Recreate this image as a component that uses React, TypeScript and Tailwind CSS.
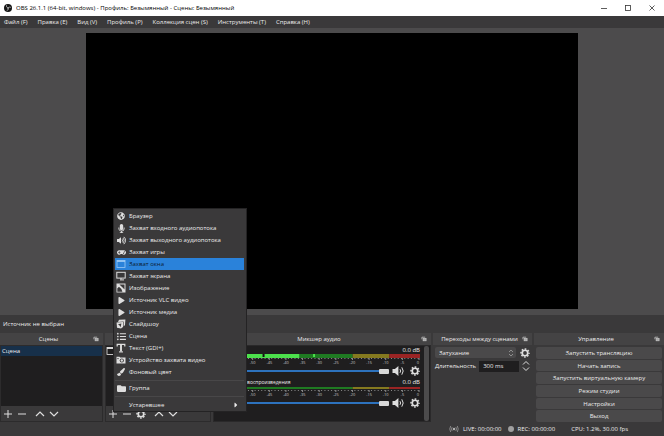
import type { ReactNode } from 'react';
import { FaGlobeAmericas, FaMicrophone, FaVolumeUp, FaGamepad, FaPlay, FaListUl, FaFolder, FaPaintBrush, FaCaretRight } from 'react-icons/fa';

const menuBar = ['Файл (F)', 'Правка (E)', 'Вид (V)', 'Профиль (P)', 'Коллекция сцен (S)', 'Инструменты (T)', 'Справка (H)'];

const controls = ['Запустить трансляцию', 'Начать запись', 'Запустить виртуальную камеру', 'Режим студии', 'Настройки', 'Выход'];

const ticks = ['-50', '-45', '-40', '-35', '-30', '-25', '-20', '-15', '-10', '-5', '0'];

const WindowIcon = () => (
  <svg viewBox="0 0 10 10" className="size-[10px]" fill="none" stroke="currentColor">
    <rect x="1" y="1.5" width="8" height="7" strokeWidth="0.8" />
    <path d="M1 2.2h8" strokeWidth="1.4" />
  </svg>
);

const MonitorIcon = () => (
  <svg viewBox="0 0 10 10" className="size-[10px]" fill="none" stroke="currentColor">
    <rect x="0.8" y="1.3" width="8.4" height="5.8" strokeWidth="1" />
    <path d="M5 7v1.5M4 8.9h4" strokeWidth="1" />
  </svg>
);

const ImageIcon = () => (
  <svg viewBox="0 0 10 10" className="size-[10px]">
    <rect x="0.5" y="0.5" width="9" height="9" fill="currentColor" />
    <path d="M1.3 8.7V5.4l1.6-1.6L5.4 6l1 2.7z" fill="#3a393a" />
    <path d="M3.4 1.6h5.1v5L6.3 4.2z" fill="#3a393a" />
    <circle cx="3" cy="3" r="1" fill="currentColor" />
  </svg>
);

const SlidesIcon = () => (
  <svg viewBox="0 0 10 10" className="size-[10px]" fill="currentColor">
    <path d="M3 .8 9.4.4 9 6 7.6 7.6V2.6L2 2.9z" />
    <path d="M.6 3.4 7 3v5L5 9.6 1 8.8z" />
    <path d="m2 5.2 3.4-.6-.8 3.6-1-1.6z" fill="#3a393a" />
  </svg>
);

const TextIcon = () => (
  <svg viewBox="0 0 10 10" className="size-[10px]" fill="none" stroke="currentColor">
    <path d="M1.2 3.4V1.4h7.6v2" strokeWidth="1.2" />
    <path d="M5 1.4v7" strokeWidth="1.9" />
    <path d="M3 8.9h4" strokeWidth="1.1" />
  </svg>
);

const CameraIcon = () => (
  <svg viewBox="0 0 10 10" className="size-[10px]">
    <path d="M.5 1.8h3l.6.8h5.4v6h-9z" fill="currentColor" />
    <circle cx="5.8" cy="5.5" r="2.1" fill="#3a393a" />
    <circle cx="5.8" cy="5.5" r="1.2" fill="currentColor" />
    <path d="M1.2 3.6h1.6" stroke="#3a393a" strokeWidth="0.8" />
  </svg>
);

const PopOutIcon = () => (
  <svg viewBox="0 0 8 8" className="size-[6px]" fill="none" stroke="#c8c8c8">
    <path d="M1.2 4.4V1.6h4.4" strokeWidth="1" />
    <rect x="2.8" y="3.2" width="4" height="3.2" fill="#a8a8a8" strokeWidth="0.9" />
  </svg>
);

const GearIcon = () => (
  <svg viewBox="0 0 12 12" className="size-[10px]" fill="none" stroke="#dedede">
    <circle cx="6" cy="6" r="3.3" strokeWidth="2" />
    <circle cx="6" cy="6" r="4.8" strokeWidth="1.8" strokeDasharray="2 1.77" strokeDashoffset="1" />
  </svg>
);

const SpeakerIcon = () => (
  <svg viewBox="0 0 13 12" className="h-3 w-[13px]" fill="none" stroke="#dedede">
    <path d="M.5 4h2.4L6.4 1v10L2.9 8H.5z" fill="#dedede" stroke="none" />
    <path d="M8 4.2q1.2 1.8 0 3.6M9.8 2.3q2.8 3.7 0 7.4" strokeWidth="1" />
  </svg>
);

const ObsLogo = () => (
  <svg viewBox="0 0 16 16" className="size-2">
    <circle cx="8" cy="8" r="8" fill="#151515" />
    <g fill="none" stroke="#e8e8e8" strokeWidth="1.3" strokeLinecap="round">
      <path d="M5 3.2c-.6 3 1.2 4.6 3.6 4.4" />
      <path d="M13 6.4c-2.6-1-4.7.2-5 2.2" />
      <path d="M6.2 13c2.5-1 3-3 1.6-5" />
    </g>
  </svg>
);

const StreamIcon = () => (
  <svg viewBox="0 0 12 10" className="h-2 w-[10px]" fill="none" stroke="#b4b4b4">
    <circle cx="6" cy="5" r="1.5" fill="#b4b4b4" stroke="none" />
    <path d="M3.7 2.6q-1.6 2.4 0 4.8M8.3 2.6q1.6 2.4 0 4.8M1.9 1.2q-2.4 3.8 0 7.6M10.1 1.2q2.4 3.8 0 7.6" strokeWidth="0.8" />
  </svg>
);

const sources: { label: string; icon: ReactNode; active?: boolean }[] = [
  { label: 'Браузер', icon: <FaGlobeAmericas size={8} /> },
  { label: 'Захват входного аудиопотока', icon: <FaMicrophone size={9} /> },
  { label: 'Захват выходного аудиопотока', icon: <FaVolumeUp size={9} /> },
  { label: 'Захват игры', icon: <FaGamepad size={9} /> },
  { label: 'Захват окна', icon: <WindowIcon />, active: true },
  { label: 'Захват экрана', icon: <MonitorIcon /> },
  { label: 'Изображение', icon: <ImageIcon /> },
  { label: 'Источник VLC видео', icon: <FaPlay size={7} /> },
  { label: 'Источник медиа', icon: <FaPlay size={7} /> },
  { label: 'Слайдшоу', icon: <SlidesIcon /> },
  { label: 'Сцена', icon: <FaListUl size={9} /> },
  { label: 'Текст (GDI+)', icon: <TextIcon /> },
  { label: 'Устройство захвата видео', icon: <CameraIcon /> },
  { label: 'Фоновый цвет', icon: <FaPaintBrush size={8} /> },
];

function Dock({ title, children }: { title?: string; children: ReactNode }) {
  return (
    <section className="flex min-w-0 flex-col">
      <header className="flex h-3 items-center bg-[#444344] px-1">
        <h2 className="flex-1 truncate text-center">{title}</h2>
        <button aria-label="Открепить панель"><PopOutIcon /></button>
      </header>
      {children}
    </section>
  );
}

function ListPanel({ gear, children }: { gear?: boolean; children: ReactNode }) {
  return (
    <div className="flex flex-1 flex-col border border-[#2c2b2c]">
      <div className="flex-1 bg-[#1f1e1f]">{children}</div>
      <div className="flex h-[15px] items-center gap-[2px] px-[2px] text-[#dedede]">
        <button aria-label="Добавить">
          <svg viewBox="0 0 10 10" className="size-[10px]" stroke="currentColor"><path d="M1 5h8M5 1v8" /></svg>
        </button>
        <button aria-label="Удалить" className="ml-[2px]">
          <svg viewBox="0 0 10 10" className="size-[10px]" stroke="currentColor"><path d="M1 5h8" /></svg>
        </button>
        {gear && <button aria-label="Свойства" className="ml-[2px]"><GearIcon /></button>}
        <button aria-label="Вверх" className="ml-[6px]">
          <svg viewBox="0 0 10 10" className="size-[10px]" fill="none" stroke="currentColor"><path d="m1 7 4-4 4 4" strokeWidth="1.2" /></svg>
        </button>
        <button aria-label="Вниз" className="ml-[2px]">
          <svg viewBox="0 0 10 10" className="size-[10px]" fill="none" stroke="currentColor"><path d="m1 3 4 4 4-4" strokeWidth="1.2" /></svg>
        </button>
      </div>
    </div>
  );
}

function Channel({ name, level }: { name?: string; level?: boolean }) {
  return (
    <div className="flex h-8 flex-col">
      <div className="flex h-2 items-center justify-between">
        <span className="text-[5px]">{name}</span>
        <span>0.0 dB</span>
      </div>
      <svg viewBox="0 0 204 10" preserveAspectRatio="none" className="h-[10px] w-full">
        <rect y={level ? 0 : 1} width="136" height={level ? 4 : 2} fill="#1f7a22" />
        <rect x="136" y={level ? 0 : 1} width="37" height={level ? 4 : 2} fill="#85791f" />
        <rect x="173" y={level ? 0 : 1} width="31" height={level ? 4 : 2} fill="#9a2424" />
        {level && (
          <>
            <rect width="82" height="4" fill="#4ce04c" />
            <rect x="45" width="2" height="3" fill="#111" />
            <rect x="96" width="2" height="3" fill="#4ce04c" />
          </>
        )}
        <path d="M0 4.5h203" stroke="#8c8c8c" strokeWidth="1" strokeDasharray="1 2.36" />
        {ticks.map((tick, i) => (
          <g key={tick}>
            <path d={`M${35 + i * 16.8} 4v2`} stroke="#a8a8a8" strokeWidth="0.8" />
            <text x={i === 10 ? 202 : 35 + i * 16.8} y="10" textAnchor="middle" fontSize="4" fill="#c8c8c8">{tick}</text>
          </g>
        ))}
      </svg>
      <div className="flex h-[14px] items-center gap-[3px]">
        <input
          type="range"
          aria-label="Громкость"
          defaultValue={100}
          className="h-[6px] min-w-0 flex-1 appearance-none bg-[linear-gradient(#2d72bd,#2d72bd)] bg-size-[100%_2px] bg-center bg-no-repeat [&::-webkit-slider-thumb]:h-[5px] [&::-webkit-slider-thumb]:w-[10px] [&::-webkit-slider-thumb]:appearance-none [&::-webkit-slider-thumb]:rounded-[1px] [&::-webkit-slider-thumb]:bg-[#d8d8d8]"
        />
        <button aria-label="Выключить звук"><SpeakerIcon /></button>
        <button aria-label="Параметры звука" className="ml-[2px]"><GearIcon /></button>
      </div>
    </div>
  );
}

function SourceMenu() {
  return (
    <div role="menu" className="absolute bottom-6 left-[113px] w-[134px] border border-[#242324] bg-[#3a393a] pt-px pr-[2px] pl-px">
      {sources.map((s) => (
        <button
          key={s.label}
          role="menuitem"
          className={`flex h-3 w-full items-center gap-[3px] pl-px text-left ${s.active ? 'bg-[#2a82da] text-[#0c1c30]' : ''}`}
        >
          <span className={`flex w-[10px] justify-center ${s.active ? 'text-[#9ccaf5]' : 'text-[#dedede]'}`}>{s.icon}</span>
          {s.label}
        </button>
      ))}
      <hr className="mt-[2px] mb-px border-[#484748]" />
      <button role="menuitem" className="flex h-3 w-full items-center gap-[3px] pl-px text-left">
        <span className="flex w-[10px] justify-center text-[#dedede]"><FaFolder size={9} /></span>
        Группа
      </button>
      <hr className="my-[2px] border-[#484748]" />
      <button role="menuitem" className="flex h-3 w-full items-center justify-between pr-1 pl-[14px] text-left">
        Устаревшее
        <FaCaretRight size={8} />
      </button>
    </div>
  );
}

export default function App() {
  return (
    <div className="relative flex min-h-screen flex-col bg-[#3a393a] font-['Open_Sans','Noto_Sans',sans-serif] text-[6px] leading-[10px] text-[#ececec]">
      <header className="flex h-4 items-center bg-white pr-2 pl-1 text-black">
        <ObsLogo />
        <h1 className="ml-1 flex-1 truncate">OBS 26.1.1 (64-bit, windows) - Профиль: Безымянный - Сцены: Безымянный</h1>
        <div className="flex gap-4">
          <button aria-label="Свернуть">
            <svg viewBox="0 0 8 8" className="size-2" stroke="#333"><path d="M1 4.5h6" strokeWidth="0.8" /></svg>
          </button>
          <button aria-label="Развернуть">
            <svg viewBox="0 0 8 8" className="size-2" stroke="#333" fill="none"><rect x="1.5" y="1.5" width="5" height="5" strokeWidth="0.8" /></svg>
          </button>
          <button aria-label="Закрыть">
            <svg viewBox="0 0 8 8" className="size-2" stroke="#333"><path d="m1.5 1.5 5 5m0-5-5 5" strokeWidth="0.8" /></svg>
          </button>
        </div>
      </header>

      <nav className="flex h-3 items-center gap-[10px] px-1">
        {menuBar.map((item) => (
          <button key={item}>{item}</button>
        ))}
      </nav>

      <main className="flex flex-1 justify-center bg-[#4c4b4c] pt-[5px] pb-[6px]">
        <div className="w-[74%] bg-black" />
      </main>

      <p className="flex h-[18px] items-center px-[3px]">Источник не выбран</p>

      <div className="grid h-[89px] grid-cols-[103fr_106fr_218fr_99fr_130fr] gap-[2px]">
        <Dock title="Сцены">
          <ListPanel>
            <div className="h-[10px] bg-[#17304a] px-px">Сцена</div>
          </ListPanel>
        </Dock>

        <Dock>
          <ListPanel gear><WindowIcon /></ListPanel>
        </Dock>

        <Dock title="Микшер аудио">
          <div className="flex flex-1 gap-1 border border-[#2a292a] bg-[#1f1e1f] pr-px pl-1">
            <div className="min-w-0 flex-1">
              <Channel level />
              <Channel name="Устройство воспроизведения" />
            </div>
            <div className="w-[5px] rounded-xs bg-[#4c4b4c]" />
          </div>
        </Dock>

        <Dock title="Переходы между сценами">
          <div className="flex flex-col gap-[2px] px-[2px] pt-[2px]">
            <div className="flex h-[11px] items-center gap-1">
              <div className="relative min-w-0 flex-1">
                <select aria-label="Переход" className="block h-[11px] w-full appearance-none rounded-xs bg-[#4a494a] px-1">
                  <option>Затухание</option>
                </select>
                <svg viewBox="0 0 6 8" className="pointer-events-none absolute top-[2px] right-[2px] h-2 w-[6px]" fill="none" stroke="#a0a0a0">
                  <path d="m1 3 2-2 2 2M1 5l2 2 2-2" strokeWidth="0.8" />
                </svg>
              </div>
              <button aria-label="Параметры перехода"><GearIcon /></button>
            </div>
            <div className="flex h-3 items-center gap-[3px]">
              <label htmlFor="duration">Длительность</label>
              <input id="duration" defaultValue="300 ms" className="h-[11px] min-w-0 flex-1 bg-[#1f1e1f] px-1" />
              <svg viewBox="0 0 8 12" className="h-3 w-2" fill="none" stroke="#dedede">
                <path d="m1 4.5 3-3 3 3M1 7.5l3 3 3-3" strokeWidth="1" />
              </svg>
            </div>
          </div>
        </Dock>

        <Dock title="Управление">
          <div className="flex flex-1 flex-col gap-px px-[2px] pt-[2px]">
            {controls.map((label) => (
              <button key={label} className="min-h-0 flex-1 rounded-xs bg-[#4a494a]">{label}</button>
            ))}
          </div>
        </Dock>
      </div>

      <footer className="flex h-[14px] items-center justify-end pr-9">
        <StreamIcon />
        <span className="ml-1">LIVE: 00:00:00</span>
        <span className="ml-[6px] size-[6px] rounded-full bg-[#a0a0a0]" />
        <span className="ml-1">REC: 00:00:00</span>
        <span className="ml-4">CPU: 1.2%, 30.00 fps</span>
      </footer>

      <SourceMenu />
    </div>
  );
}
